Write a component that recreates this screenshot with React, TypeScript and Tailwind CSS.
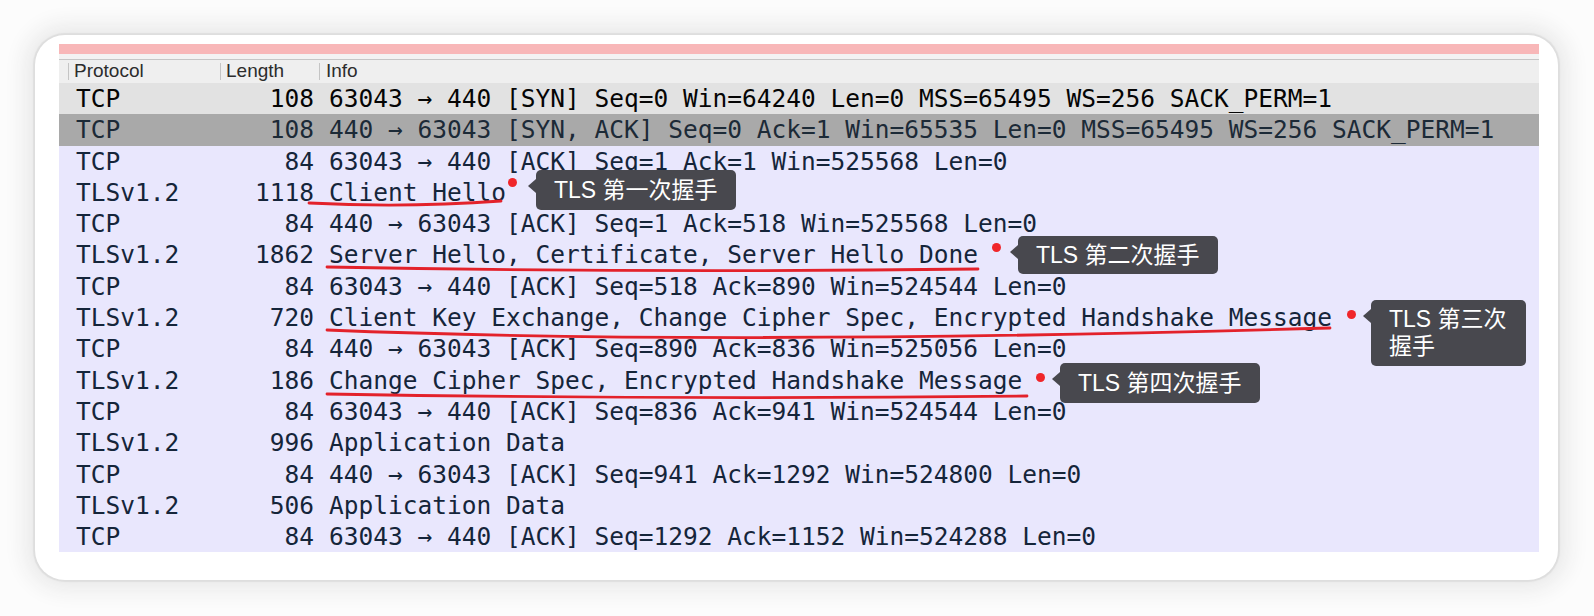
const rows = [
  { p: "TCP", l: "108", i: "63043 → 440 [SYN] Seq=0 Win=64240 Len=0 MSS=65495 WS=256 SACK_PERM=1", kind: "first" },
  { p: "TCP", l: "108", i: "440 → 63043 [SYN, ACK] Seq=0 Ack=1 Win=65535 Len=0 MSS=65495 WS=256 SACK_PERM=1", kind: "selected" },
  { p: "TCP", l: "84", i: "63043 → 440 [ACK] Seq=1 Ack=1 Win=525568 Len=0" },
  { p: "TLSv1.2", l: "1118", i: "Client Hello" },
  { p: "TCP", l: "84", i: "440 → 63043 [ACK] Seq=1 Ack=518 Win=525568 Len=0" },
  { p: "TLSv1.2", l: "1862", i: "Server Hello, Certificate, Server Hello Done" },
  { p: "TCP", l: "84", i: "63043 → 440 [ACK] Seq=518 Ack=890 Win=524544 Len=0" },
  { p: "TLSv1.2", l: "720", i: "Client Key Exchange, Change Cipher Spec, Encrypted Handshake Message" },
  { p: "TCP", l: "84", i: "440 → 63043 [ACK] Seq=890 Ack=836 Win=525056 Len=0" },
  { p: "TLSv1.2", l: "186", i: "Change Cipher Spec, Encrypted Handshake Message" },
  { p: "TCP", l: "84", i: "63043 → 440 [ACK] Seq=836 Ack=941 Win=524544 Len=0" },
  { p: "TLSv1.2", l: "996", i: "Application Data" },
  { p: "TCP", l: "84", i: "440 → 63043 [ACK] Seq=941 Ack=1292 Win=524800 Len=0" },
  { p: "TLSv1.2", l: "506", i: "Application Data" },
  { p: "TCP", l: "84", i: "63043 → 440 [ACK] Seq=1292 Ack=1152 Win=524288 Len=0" },
];

const rowStyle = (kind?: string) => {
  if (kind === "first") return "bg-[#e2e2e2] text-[#050505]";
  if (kind === "selected") return "bg-[#a9a9a9] text-[#1c2a37]";
  return "bg-[#e9e7fd] text-[#15253a]";
};

function Tip({ className, children }: { className: string; children: React.ReactNode }) {
  return (
    <div
      className={
        "absolute rounded-[5px] bg-[#48484e] px-[18px] font-['Liberation_Sans','Noto_Sans_CJK_SC',sans-serif] text-[23px] leading-[27px] text-white " +
        className
      }
    >
      <span className="absolute left-[-8px] top-[9px] h-0 w-0 border-y-[7px] border-r-[8px] border-y-transparent border-r-[#48484e]" />
      {children}
    </div>
  );
}

function Dot({ className }: { className: string }) {
  return <span className={"absolute h-[9px] w-[9px] rounded-full bg-[#f0262a] " + className} />;
}

export default function App() {
  return (
    <div className="h-[616px] w-full bg-[#fcfcfc] pl-[35px] pt-[35px]">
      <div className="h-[545px] w-[1523px] rounded-[30px] bg-white pl-[24px] pt-[9px] shadow-[0_0_1px_2px_#dedede,0_0_22px_10px_#e9e9e9]">
        <div className="w-[1480px]">
          <div className="h-[10px] bg-[#f8b7b8]" />
          <div className="h-[6px] border-b border-[#c6c6c6] bg-[#f3f3f3]" />

          {/* column header */}
          <div className="flex h-[23px] items-center bg-[#efefef] font-['Liberation_Sans',sans-serif] text-[19px] text-[#2c2c2c]">
            <div className="w-[9px]" />
            <div className="flex h-[17px] w-[152px] items-center border-l border-[#c4c4c4] pl-[5px]">Protocol</div>
            <div className="flex h-[17px] w-[99px] items-center border-l border-[#c4c4c4] pl-[5px]">Length</div>
            <div className="flex h-[17px] flex-1 items-center border-l border-[#c4c4c4] pl-[6px]">Info</div>
          </div>

          {/* packet list */}
          <div className="relative font-['DejaVu_Sans_Mono',monospace] text-[24.5px]">
            {rows.map((r, idx) => (
              <div key={idx} className={"flex h-[31.3px] items-center whitespace-pre leading-[31.3px] " + rowStyle(r.kind)}>
                <div className="w-[170px] pl-[17px]">{r.p}</div>
                <div className="w-[85px] text-right">{r.l}</div>
                <div className="pl-[15px]">{r.i}</div>
              </div>
            ))}

            <svg className="pointer-events-none absolute left-0 top-0" width="1480" height="470" fill="none">
              <g stroke="#e3222b" strokeWidth="2.8" strokeLinecap="round">
                <path d="M250 120 Q346 125 442 118" />
                <path d="M268 184 Q590 190 919 186" />
                <path d="M268 247 Q660 263 1271 245" />
                <path d="M268 311 Q618 317 968 313" />
              </g>
            </svg>

            <Dot className="left-[449px] top-[95px]" />
            <Tip className="left-[477px] top-[87px] flex h-[40px] items-center">TLS 第一次握手</Tip>

            <Dot className="left-[933px] top-[160px]" />
            <Tip className="left-[959px] top-[153px] flex h-[38px] items-center">TLS 第二次握手</Tip>

            <Dot className="left-[1288px] top-[227px]" />
            <Tip className="left-[1312px] top-[217px] w-[155px] py-[6px]">
              TLS 第三次
              <br />
              握手
            </Tip>

            <Dot className="left-[977px] top-[290px]" />
            <Tip className="left-[1001px] top-[280px] flex h-[40px] items-center">TLS 第四次握手</Tip>
          </div>
        </div>
      </div>
    </div>
  );
}
